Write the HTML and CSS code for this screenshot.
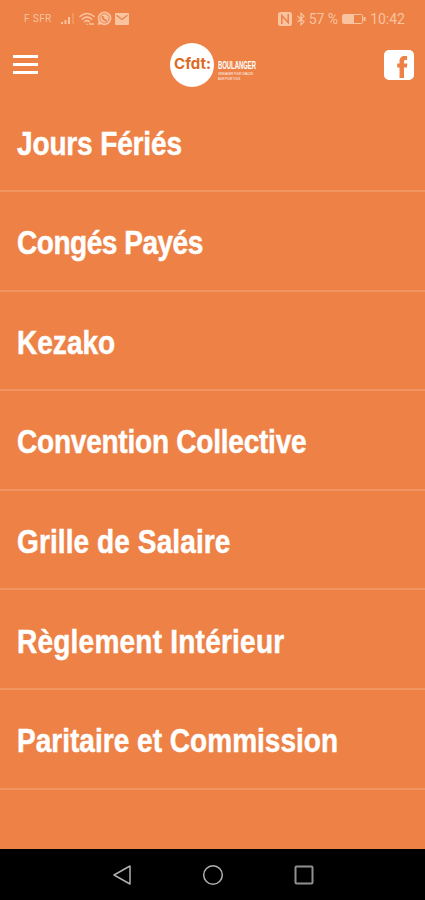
FILE: index.html
```html
<!DOCTYPE html>
<html lang="fr">
<head>
  <meta charset="UTF-8">
  <meta name="viewport" content="width=device-width, initial-scale=1.0">
  <title>CFDT Boulanger</title>
  <link rel="stylesheet" href="styles.css">
</head>
<body>
  <div class="status-bar">
    <div class="status-left">
      <span class="carrier">F SFR</span>
      <svg class="signal" width="15" height="13" viewBox="0 0 15 13">
        <path d="M1 10h2v2H1zM4.500 8h2v4h-2zM8 5h2v7H8z"/>
        <path d="M12 1h2v11h-2z" opacity=".3"/>
      </svg>
      <svg class="wifi" width="16" height="14" viewBox="0 0 16 14">
        <path d="M1 4.500Q8-1.500 15 4.500M3.200 7.200Q8 3 12.800 7.200M5.500 9.800Q8 7.500 10.500 9.800"/>
        <path d="M8 12.300h.1M10.500 12h4"/>
      </svg>
      <svg class="whatsapp" width="15" height="15" viewBox="0 0 15 15">
        <path class="bubble" d="M7.500 .5a6.800 6.800 0 1 1-3.300 12.700L.7 14l.9-3.400A6.800 6.800 0 0 1 7.500 .5z"/>
        <circle cx="7.500" cy="7.300" r="4.700"/>
        <path class="phone" d="M5.500 5c.2 2.500 2 4.400 4.500 4.700"/>
      </svg>
      <svg class="mail" width="14" height="12" viewBox="0 0 14 12">
        <rect width="14" height="12" rx="1"/>
        <path d="M1.500 2.200 7 6.500l5.500-4.300"/>
      </svg>
    </div>
    <div class="status-right">
      <svg class="nfc" width="14" height="14" viewBox="0 0 14 14">
        <rect width="14" height="14" rx="2.500"/>
        <path d="M3.800 12V3.500l6.400 7V2"/>
      </svg>
      <svg class="bluetooth" width="10" height="14" viewBox="0 0 10 14">
        <path d="M1.500 4 8 9.800 5 12.800V1.200L8 4.200 1.500 10M.5 7h.6M8.900 7h.6"/>
      </svg>
      <span class="percent">57 %</span>
      <svg class="battery" width="24" height="12" viewBox="0 0 24 12">
        <rect class="case" x=".5" y="1.500" width="20" height="9" rx="1"/>
        <path d="M1 2h11v8H1zM21.500 4h2v4h-2z"/>
      </svg>
      <span class="clock">10:42</span>
    </div>
  </div>

  <header class="app-bar">
    <button class="menu-button" aria-label="Menu">
      <span></span>
      <span></span>
      <span></span>
    </button>
    <div class="brand">
      <div class="brand-logo"><span>Cfdt:</span></div>
      <div class="brand-text">
        <span class="brand-name">BOULANGER</span>
        <span class="brand-tagline">S'ENGAGER POUR CHACUN</span>
        <span class="brand-tagline">AGIR POUR TOUS</span>
      </div>
    </div>
    <a class="facebook" href="#" aria-label="Facebook">
      <svg width="30" height="30" viewBox="0 0 30 30">
        <rect width="30" height="30" rx="5"/>
        <path d="M15.500 28V17.500h-2.300v-4h2.300v-2.200c0-3.300 2-5.300 5-5.300h2.600v4h-1.500c-1.200 0-1.600.5-1.600 1.600v1.900h3.300l-.4 4h-2.900V28z"/>
      </svg>
    </a>
  </header>

  <main>
    <ul class="menu-list">
      <li><a href="#">Jours Fériés</a></li>
      <li><a href="#">Congés Payés</a></li>
      <li><a href="#">Kezako</a></li>
      <li><a href="#">Convention Collective</a></li>
      <li><a href="#">Grille de Salaire</a></li>
      <li><a href="#">Règlement Intérieur</a></li>
      <li><a href="#">Paritaire et Commission</a></li>
    </ul>
  </main>

  <nav class="nav-bar">
    <svg width="22" height="22" viewBox="0 0 22 22">
      <path d="M19 2v18L3 11z"/>
    </svg>
    <svg width="22" height="22" viewBox="0 0 22 22">
      <circle cx="11" cy="11" r="9.300"/>
    </svg>
    <svg width="22" height="22" viewBox="0 0 22 22">
      <rect class="recent" x="2.500" y="2.500" width="17" height="17" rx="1"/>
    </svg>
  </nav>
</body>
</html>
```
FILE: styles.css
```css
* {
  box-sizing: border-box;
}
body {
  margin: 0;
  height: 900px;
  display: flex;
  flex-direction: column;
  overflow: hidden;
  background-color: #ed8146;
  font-family: "Liberation Sans", Arial, sans-serif;
  color: #fff;
}
svg {
  display: block;
  flex: none;
}

/* status bar */
.status-bar {
  height: 37px;
  padding: 0 20px 0 24px;
  display: flex;
  justify-content: space-between;
  align-items: center;
  font-family: Roboto, sans-serif;
  color: #f9c3a0;
}
.status-bar svg {
  fill: #f9c3a0;
}
.status-left,
.status-right {
  display: flex;
  align-items: center;
}
.carrier {
  width: 36px;
  font-size: 10px;
  letter-spacing: 0.4px;
  white-space: nowrap;
}
.wifi {
  margin-left: 4px;
}
.wifi path {
  fill: none;
  stroke: #f9c3a0;
  stroke-width: 1.5;
  stroke-linecap: round;
}
.whatsapp {
  margin: 0 3px 0 2px;
}
.whatsapp circle,
.whatsapp .phone {
  fill: none;
  stroke: #ed8146;
  stroke-width: 1;
}
.whatsapp .phone {
  stroke-width: 2;
}
.mail path {
  fill: none;
  stroke: #ed8146;
  stroke-width: 1.3;
}
.nfc path {
  fill: none;
  stroke: #ed8146;
  stroke-width: 1.5;
}
.bluetooth {
  margin: 0 3px 0 4px;
}
.bluetooth path {
  fill: none;
  stroke: #f9c3a0;
  stroke-width: 1.2;
}
.percent,
.clock {
  font-size: 14px;
  white-space: nowrap;
}
.battery {
  margin: 0 4px 0 4px;
}
.battery .case {
  fill: none;
  stroke: #f9c3a0;
  stroke-width: 1;
}

/* header */
.app-bar {
  height: 55px;
  padding: 0 11px 0 13px;
  display: grid;
  grid-template-columns: 157px 1fr 30px;
  align-items: center;
}
.menu-button {
  width: 25px;
  padding: 0;
  border: 0;
  background: none;
  display: flex;
  flex-direction: column;
  gap: 5px;
}
.menu-button span {
  width: 25px;
  height: 3px;
  background-color: #fff;
}
.brand {
  display: flex;
  align-items: center;
}
.brand-logo {
  width: 44px;
  height: 44px;
  flex: none;
  border-radius: 50%;
  background-color: #fff;
  display: flex;
  align-items: center;
  justify-content: center;
}
.brand-logo span {
  padding: 0 0 2px 1px;
  font-family: Inter, sans-serif;
  font-size: 15px;
  font-weight: 700;
  color: #dc6a25;
}
.brand-text {
  width: 40px;
  margin: 12px 0 0 4px;
  display: flex;
  flex-direction: column;
  align-items: flex-start;
  white-space: nowrap;
}
.brand-name {
  font-size: 10px;
  line-height: 10px;
  font-weight: 700;
  transform: scaleX(0.59);
  transform-origin: left;
}
.brand-tagline {
  font-size: 4px;
  line-height: 5px;
  transform: scaleX(0.64);
  transform-origin: left;
}
.facebook rect {
  fill: #fff;
}
.facebook path {
  fill: #ed8146;
}

/* menu */
main {
  flex: 1;
}
.menu-list {
  margin: 0;
  padding: 0.4px 0 0;
  list-style: none;
}
.menu-list li {
  height: 99.6px;
  padding: 0 0 0 17px;
  display: flex;
  align-items: center;
  border-bottom: 2px solid #ef9562;
}
.menu-list a {
  padding-top: 4px;
  color: #fff;
  font-size: 34px;
  font-weight: 700;
  text-decoration: none;
  white-space: nowrap;
  transform: scaleX(0.825);
  transform-origin: left;
  -webkit-text-stroke: 0.5px #fff;
}
.menu-list li:nth-child(1) a {
  letter-spacing: -0.2px;
}
.menu-list li:nth-child(2) a {
  letter-spacing: -0.6px;
}
.menu-list li:nth-child(4) a {
  letter-spacing: -0.3px;
}
.menu-list li:nth-child(5) a {
  letter-spacing: 0.1px;
}
.menu-list li:nth-child(6) a {
  letter-spacing: 0.25px;
}

/* android buttons */
.nav-bar {
  height: 51px;
  background-color: #000;
  display: flex;
  justify-content: center;
  align-items: center;
  gap: 69px;
}
.nav-bar svg {
  fill: none;
  stroke: #b0b0b0;
  stroke-width: 1.5;
  stroke-linejoin: round;
}
.nav-bar .recent {
  stroke: #909090;
  stroke-width: 2;
}
```
